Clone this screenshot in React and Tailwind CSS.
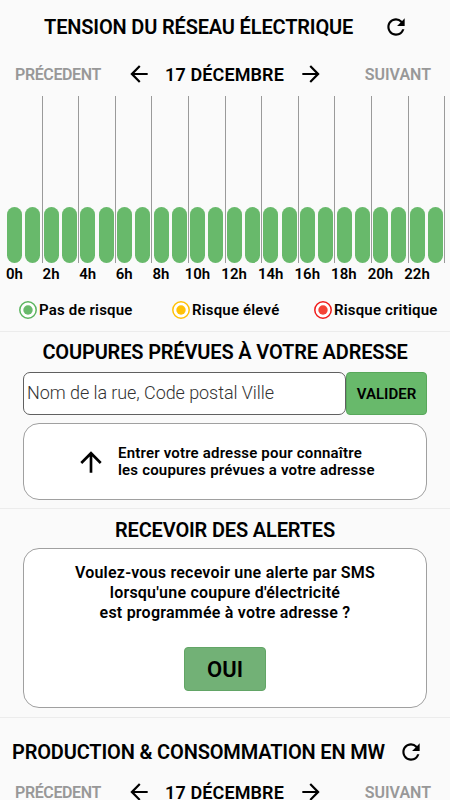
import { MdArrowBack, MdArrowForward, MdArrowUpward, MdRefresh } from 'react-icons/md';

const slots = ['0h', '2h', '4h', '6h', '8h', '10h', '12h', '14h', '16h', '18h', '20h', '22h'];

function DayPicker() {
  return (
    <div className="flex h-[43px] items-center justify-between pl-[15px] pr-[19px] whitespace-nowrap">
      <span className="w-[111px] text-base leading-4 font-[560] tracking-[-0.38px] text-[#989898]">PRÉCEDENT</span>
      <div className="flex items-center pb-px">
        <MdArrowBack className="size-[26px]" />
        <span className="w-[146px] pt-px text-center text-lg leading-4 font-[560] tracking-[0.12px]">17 DÉCEMBRE</span>
        <MdArrowForward className="size-[26px]" />
      </div>
      <span className="w-[108px] text-right text-base leading-4 font-[560] text-[#989898]">SUIVANT</span>
    </div>
  );
}

function Bar() {
  return <div className="h-[56px] w-[15px] rounded-full bg-[#68b96b]"></div>;
}

function Legend({ ring, dot, label }) {
  return (
    <div className="flex items-center gap-[2px]">
      <svg viewBox="0 0 18 18" className="size-[18px]">
        <circle cx="9" cy="9" r="8.2" fill="#fff" stroke={ring} strokeWidth="1.5" />
        <circle cx="9" cy="9" r="4.7" fill={dot} />
      </svg>
      <span className="text-[15px] font-semibold tracking-[0.18px]">{label}</span>
    </div>
  );
}

export default function App() {
  return (
    <div className="h-[800px] w-[450px] overflow-hidden bg-[#fafafa] font-['Roboto',sans-serif] text-black">
      {/* Grid tension */}
      <section className="h-[332px] border-b border-[#ececec]">
        <div className="flex h-[53px] items-center gap-[29px] pl-[44px] whitespace-nowrap">
          <h2 className="w-[310px] text-xl font-[560] tracking-[-0.16px]">TENSION DU RÉSEAU ÉLECTRIQUE</h2>
          <MdRefresh className="size-[26px]" />
        </div>
        <DayPicker />
        <div className="flex pl-[6px]">
          {slots.map((hour) => (
            <div key={hour} className="w-[36.6px]">
              <div className="flex h-[167px] items-end gap-[3.3px] border-r border-[#9a9a9a] pl-[1.2px]">
                <Bar />
                <Bar />
              </div>
              <div className="flex h-[22px] w-[17px] items-center justify-center text-[15px] font-semibold">{hour}</div>
            </div>
          ))}
        </div>
        <div className="flex h-[50px] items-center pl-[19px] whitespace-nowrap">
          <div className="w-[153px]">
            <Legend ring="#5cb560" dot="#68b96b" label="Pas de risque" />
          </div>
          <div className="w-[142px]">
            <Legend ring="#ffc107" dot="#ffc107" label="Risque élevé" />
          </div>
          <Legend ring="#f01c1c" dot="#f44336" label="Risque critique" />
        </div>
      </section>

      {/* Address lookup */}
      <section className="h-[177px] border-b border-[#ececec] px-[23px]">
        <h2 className="flex h-[40px] items-center justify-center text-xl font-[560] tracking-[-0.16px] whitespace-nowrap">
          COUPURES PRÉVUES À VOTRE ADRESSE
        </h2>
        <div className="flex h-[43px]">
          <div className="flex w-[323px] items-center rounded-[7px] border border-[#606060] bg-white pb-[2px] pl-[3px] text-lg font-light tracking-[-0.07px] text-[#333]">
            Nom de la rue, Code postal Ville
          </div>
          <button className="w-[81px] rounded-[4px] border border-[#58a85b] bg-[#68b96b] pt-px text-[15px] font-semibold">
            VALIDER
          </button>
        </div>
        <div className="mt-[8px] flex h-[77px] items-center rounded-[16px] border border-[#a0a0a0] bg-white pl-[51px]">
          <MdArrowUpward className="size-[32px]" />
          <p className="ml-[11px] pt-px text-[15px] leading-[17px] font-semibold tracking-[0.19px] whitespace-nowrap">
            Entrer votre adresse pour connaître
            <br />
            les coupures prévues a votre adresse
          </p>
        </div>
      </section>

      {/* SMS alerts */}
      <section className="h-[209px] border-b border-[#ececec] px-[23px]">
        <h2 className="flex h-[39px] items-center justify-center pt-[2px] text-xl font-[560] tracking-[-0.16px]">
          RECEVOIR DES ALERTES
        </h2>
        <div className="flex h-[160px] flex-col items-center rounded-[16px] border border-[#a0a0a0] bg-white pt-[14px]">
          <p className="text-center text-base leading-[20px] font-semibold tracking-[0.22px] whitespace-nowrap">
            Voulez-vous recevoir une alerte par SMS
            <br />
            lorsqu'une coupure d'électricité
            <br />
            est programmée à votre adresse ?
          </p>
          <button className="mt-[24px] h-[44px] w-[82px] rounded-[4px] border border-[#62a566] bg-[#72b176] text-[22px] font-semibold">
            OUI
          </button>
        </div>
      </section>

      {/* Production */}
      <section>
        <div className="flex h-[53px] items-center gap-[13px] pt-[15px] pl-[12px] whitespace-nowrap">
          <h2 className="w-[373px] text-xl font-[560] tracking-[-0.16px]">PRODUCTION & CONSOMMATION EN MW</h2>
          <MdRefresh className="size-[26px]" />
        </div>
        <DayPicker />
      </section>
    </div>
  );
}
